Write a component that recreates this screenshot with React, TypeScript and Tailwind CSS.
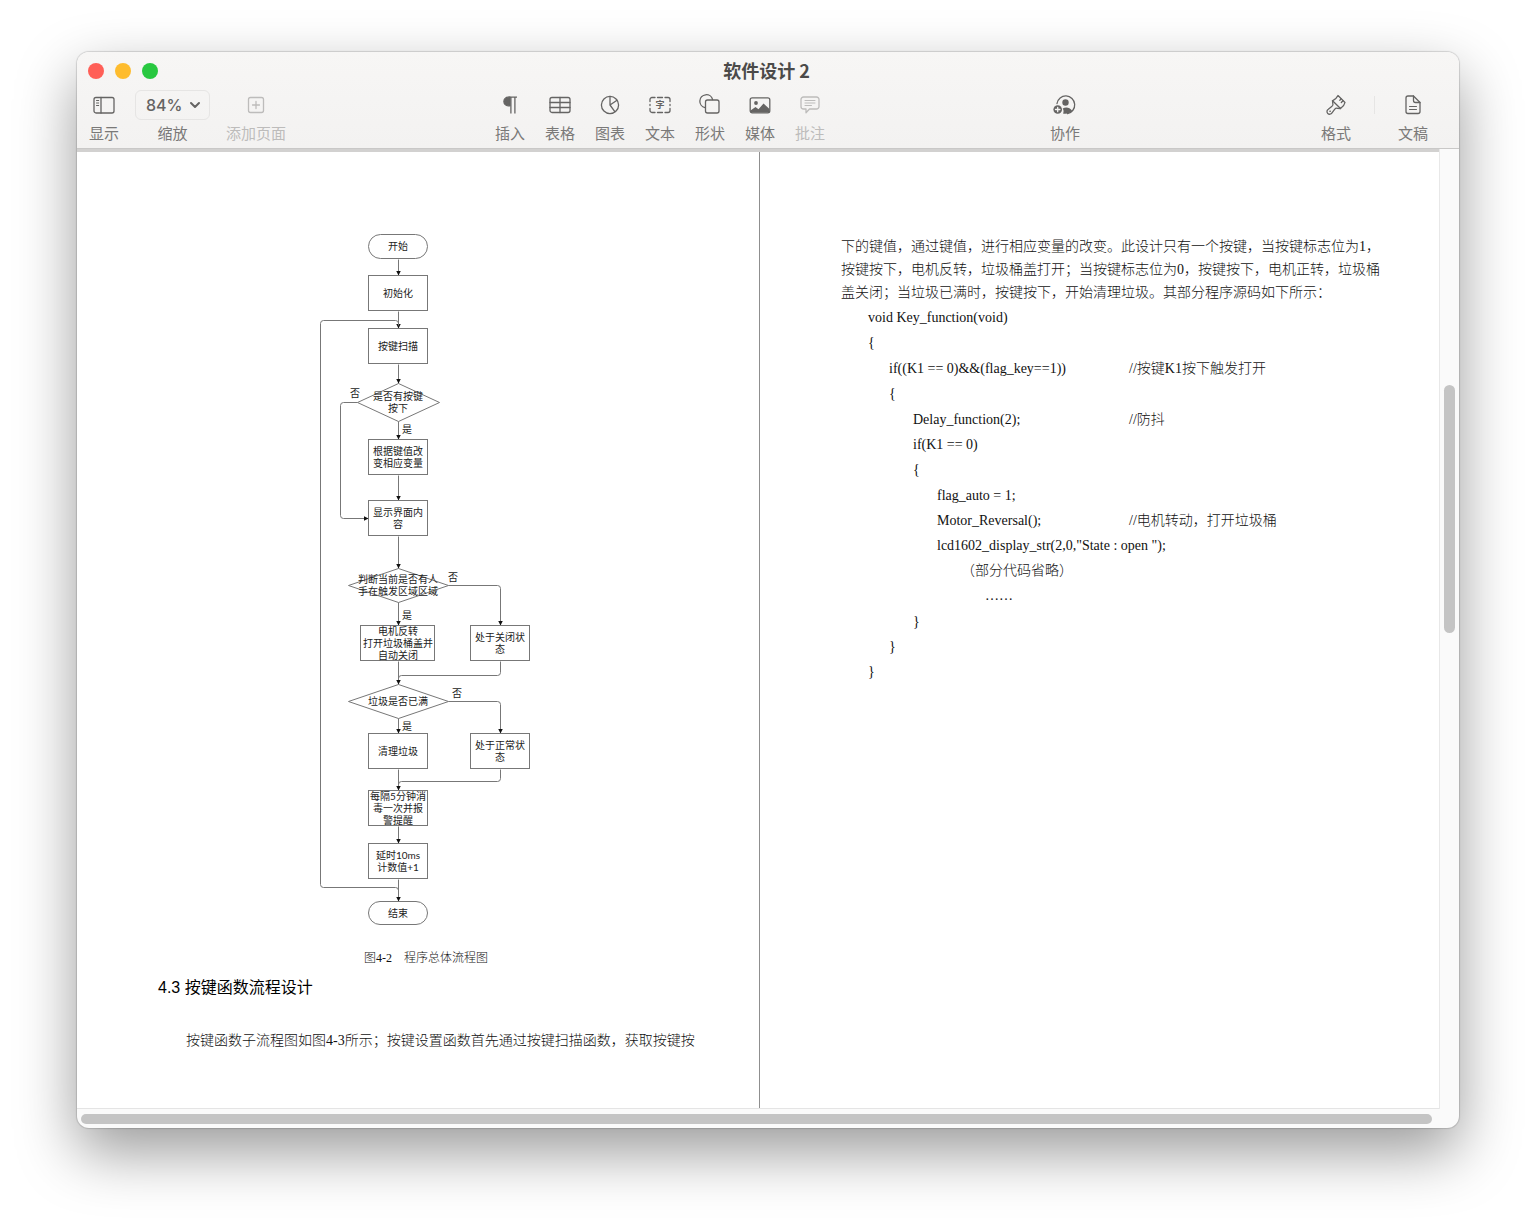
import type { ReactNode } from "react";
import { clsx } from "clsx";

type Box = { x: number; y: number; w: number; h: number; lines: string[]; top: number; pill?: boolean };

const BOXES: Box[] = [
  { x: 59, y: 10, w: 59, h: 24, lines: ["开始"], top: 22, pill: true },
  { x: 59, y: 51, w: 59, h: 35, lines: ["初始化"], top: 69 },
  { x: 59, y: 104, w: 59, h: 35, lines: ["按键扫描"], top: 122 },
  { x: 59, y: 215, w: 59, h: 35, lines: ["根据键值改", "变相应变量"], top: 227 },
  { x: 59, y: 276, w: 59, h: 35, lines: ["显示界面内", "容"], top: 288 },
  { x: 51, y: 401, w: 74, h: 35, lines: ["电机反转", "打开垃圾桶盖并", "自动关闭"], top: 407 },
  { x: 161, y: 401, w: 59, h: 35, lines: ["处于关闭状", "态"], top: 413 },
  { x: 59, y: 509, w: 59, h: 35, lines: ["清理垃圾"], top: 527 },
  { x: 161, y: 509, w: 59, h: 35, lines: ["处于正常状", "态"], top: 521 },
  { x: 59, y: 566, w: 59, h: 35, lines: ["每隔5分钟消", "毒一次并报", "警提醒"], top: 572 },
  { x: 59, y: 619, w: 59, h: 35, lines: ["延时10ms", "计数值+1"], top: 631 },
  { x: 59, y: 677, w: 59, h: 23, lines: ["结束"], top: 689, pill: true },
];

const DIAMONDS = [
  { y: 177, rx: 41, ry: 19, lines: ["是否有按键", "按下"], top: 172 },
  { y: 360, rx: 50, ry: 17, lines: ["判断当前是否有人", "手在触发区域区域"], top: 355 },
  { y: 476, rx: 50, ry: 17, lines: ["垃圾是否已满"], top: 477 },
];

const EDGES = [
  "M88 34V50",
  "M88 86V103",
  "M88 139V158",
  "M88 196V214",
  "M88 250V275",
  "M88 311V343",
  "M88 377V400",
  "M88 436V459",
  "M88 493V508",
  "M88 544V565",
  "M88 601V618",
  "M88 654V676",
  "M47 177H33Q30 177 30 180V290Q30 293 33 293H58",
  "M138 360H187Q190 360 190 363V400",
  "M138 476H187Q190 476 190 479V508",
];

const JOINS = [
  "M88 100V98Q88 95 85 95H13Q10 95 10 98V659Q10 662 13 662H85Q88 662 88 665",
  "M190 436V447Q190 450 187 450H91Q88 450 88 453",
  "M190 544V553Q190 556 187 556H91Q88 556 88 559",
];

const BRANCH_LABELS = [
  { x: 45, y: 169, text: "否" },
  { x: 97, y: 205, text: "是" },
  { x: 143, y: 353, text: "否" },
  { x: 97, y: 391, text: "是" },
  { x: 147, y: 469, text: "否" },
  { x: 97, y: 502, text: "是" },
];

type CodeLine = { indent: string; code: string; comment?: string };

// one group per scope
const CODE: CodeLine[][] = [
  [
    { indent: "pl-0", code: "void Key_function(void)" },
    { indent: "pl-0", code: "{" },
  ],
  [
    { indent: "pl-[21px]", code: "if((K1 == 0)&&(flag_key==1))", comment: "//按键K1按下触发打开" },
    { indent: "pl-[21px]", code: "{" },
  ],
  [
    { indent: "pl-[45px]", code: "Delay_function(2);", comment: "//防抖" },
    { indent: "pl-[45px]", code: "if(K1 == 0)" },
    { indent: "pl-[45px]", code: "{" },
  ],
  [
    { indent: "pl-[69px]", code: "flag_auto = 1;" },
    { indent: "pl-[69px]", code: "Motor_Reversal();", comment: "//电机转动，打开垃圾桶" },
    { indent: "pl-[69px]", code: 'lcd1602_display_str(2,0,"State : open ");' },
    { indent: "pl-[93px]", code: "（部分代码省略）" },
    { indent: "pl-[117px]", code: "……" },
  ],
  [
    { indent: "pl-[45px]", code: "}" },
    { indent: "pl-[21px]", code: "}" },
    { indent: "pl-0", code: "}" },
  ],
];

function Icon({ children }: { children: ReactNode }) {
  return (
    <svg
      width="24"
      height="24"
      viewBox="0 0 24 24"
      fill="none"
      stroke="currentColor"
      strokeWidth="1.3"
      strokeLinecap="round"
      strokeLinejoin="round"
      aria-hidden="true"
    >
      {children}
    </svg>
  );
}

const icons = {
  view: (
    <Icon>
      <rect x="2" y="4.5" width="20" height="15.5" rx="2" />
      <path d="M9 4.5V20" />
      <path d="M4.5 7.5H6.7M4.5 10H6.7M4.5 12.5H6.7" strokeWidth="1" />
    </Icon>
  ),
  addPage: (
    <Icon>
      <rect x="4.5" y="4.5" width="15" height="15" rx="2" />
      <path d="M12 8.5V15.5M8.5 12H15.5" />
    </Icon>
  ),
  insert: (
    <Icon>
      <path d="M12 4.2H10.2A4.3 4.3 0 0 0 10.2 12.8H12Z" fill="currentColor" />
      <path d="M10.5 4.2H19M12.9 4.2V20.5M16.9 4.2V20.5" strokeLinecap="butt" />
    </Icon>
  ),
  table: (
    <Icon>
      <rect x="2" y="4.5" width="20" height="15" rx="2" />
      <path d="M2 9.5H22M2 14.5H22M12 4.5V19.5" />
    </Icon>
  ),
  chart: (
    <Icon>
      <circle cx="12" cy="12" r="8.6" />
      <path d="M12 3.4V12L19 7.2M12 12L17 18.8" />
    </Icon>
  ),
  text: (
    <Icon>
      <path d="M2 8.5V6.5A2 2 0 0 1 4 4.5H7M9.5 4.5H14.5M17 4.5H20A2 2 0 0 1 22 6.5V8.5M22 11.5V12.5M22 15.5V17.5A2 2 0 0 1 20 19.5H17M14.5 19.5H9.5M7 19.5H4A2 2 0 0 1 2 17.5V15.5M2 12.5V11.5" />
      <text
        x="12"
        y="15"
        textAnchor="middle"
        fill="currentColor"
        stroke="none"
        className="font-['Noto_Sans_CJK_SC',sans-serif] text-[9px] font-bold"
      >
        字
      </text>
    </Icon>
  ),
  shape: (
    <Icon>
      <path d="M7 14.6A6.5 6.5 0 1 1 14.6 6.5" />
      <rect x="7.5" y="7" width="13.5" height="13" rx="2" />
    </Icon>
  ),
  media: (
    <Icon>
      <rect x="2.2" y="4.8" width="19.6" height="15" rx="2" />
      <circle cx="8" cy="10" r="1.9" fill="currentColor" stroke="none" />
      <path d="M2.5 17.5L7.5 14L10.5 16.2L15.5 10.5L21.5 16V19.5H2.5Z" fill="currentColor" stroke="none" />
    </Icon>
  ),
  comment: (
    <Icon>
      <path d="M5.5 4H18.5A2.5 2.5 0 0 1 21 6.5V13.5A2.5 2.5 0 0 1 18.5 16H11.5L8 19.8V16H5.5A2.5 2.5 0 0 1 3 13.5V6.5A2.5 2.5 0 0 1 5.5 4Z" />
      <path d="M7 7.5H17M7 10H17M7 12.5H13.5" strokeWidth="1" />
    </Icon>
  ),
  collaborate: (
    <Icon>
      <path d="M4 10.5A8.9 8.9 0 1 1 14.5 20.6" />
      <circle cx="12.5" cy="9.5" r="3.2" fill="currentColor" stroke="none" />
      <path d="M10 20.5C10.8 19.5 10.8 17 9.7 15.6C12.5 13.7 16.5 14 19 17.5C17.2 20.2 13.5 21.3 10 20.5Z" fill="currentColor" stroke="none" />
      <circle cx="4.7" cy="16.5" r="4.3" fill="currentColor" stroke="none" />
      <path d="M4.7 14.3V18.7M2.5 16.5H6.9" stroke="#f5f4f3" />
    </Icon>
  ),
  format: (
    <Icon>
      <path d="M14 2.5L21 9.5Q20.5 12.5 16.5 15.5L8.5 7.8Q12.5 5.8 14 2.5Z" />
      <path d="M8.5 7.8L8.8 10.5Q9.5 12.3 8 13.3L4.3 16.2A2.7 2.7 0 1 0 8 19.9L10.8 16.2Q12 14.7 13.7 15.4L16.5 15.5" />
      <path d="M17 5.7L15.8 7.3M19 7.7L17.3 9.5" />
      <circle cx="6" cy="18.2" r="0.5" fill="currentColor" strokeWidth="0.5" />
    </Icon>
  ),
  document: (
    <Icon>
      <path d="M7 3H12.5L19 9.5V18.5A2 2 0 0 1 17 20.5H7A2 2 0 0 1 5 18.5V5A2 2 0 0 1 7 3Z" />
      <path d="M12.5 3V7.5A2 2 0 0 0 14.5 9.5H19" />
      <path d="M8.5 13.5H15.5M8.5 16.5H15.5" strokeWidth="1" />
    </Icon>
  ),
};

function ToolButton({ icon, label, disabled }: { icon: ReactNode; label: string; disabled?: boolean }) {
  return (
    <button
      type="button"
      disabled={disabled}
      className={clsx(
        "flex shrink-0 flex-col items-center gap-[3px] text-[15px] leading-5 whitespace-nowrap",
        disabled ? "text-[#bdbcbb]" : "text-[#7a7978]",
      )}
    >
      <span className={clsx("flex h-[30px] items-center", !disabled && "text-[#656463]")}>{icon}</span>
      {label}
    </button>
  );
}

function Toolbar() {
  return (
    <header className="border-b border-[#c9c8c7] bg-linear-to-b from-[#f7f6f5] to-[#f3f2f1] pb-[5px]">
      <div className="grid h-[38px] grid-cols-[1fr_auto_1fr] items-center px-[11px]">
        <div className="flex gap-[11px]">
          <button type="button" aria-label="关闭" className="size-4 rounded-full bg-[#ff5f57]" />
          <button type="button" aria-label="最小化" className="size-4 rounded-full bg-[#febc2e]" />
          <button type="button" aria-label="全屏" className="size-4 rounded-full bg-[#28c840]" />
        </div>
        <h1 className="pr-[3px] pb-[3px] text-lg leading-6 font-bold text-[#4b4a49]">软件设计 2</h1>
      </div>

      <div className="flex items-start pr-[31px] pl-3">
        <div className="flex gap-4">
          <ToolButton icon={icons.view} label="显示" />
          <div className="flex flex-col items-center gap-[3px]">
            <div className="relative">
              <select
                id="zoom"
                defaultValue="84"
                className="h-[30px] w-[75px] appearance-none rounded-md border border-[#e6e5e4] bg-transparent pl-[10px] font-['Inter',sans-serif] text-base leading-5 font-medium text-[#656463]"
              >
                <option value="84">84%</option>
                <option value="100">100%</option>
              </select>
              <svg
                className="pointer-events-none absolute top-[10px] right-[9px] text-[#656463]"
                width="12"
                height="10"
                viewBox="0 0 12 10"
                fill="none"
                stroke="currentColor"
                strokeWidth="2"
                strokeLinecap="round"
                strokeLinejoin="round"
                aria-hidden="true"
              >
                <path d="M2 3L6 7L10 3" />
              </svg>
            </div>
            <label htmlFor="zoom" className="text-[15px] leading-5 text-[#7a7978]">
              缩放
            </label>
          </div>
          <ToolButton icon={icons.addPage} label="添加页面" disabled />
        </div>
        <div className="flex-[26]" />
        <div className="flex gap-5">
          <ToolButton icon={icons.insert} label="插入" />
          <ToolButton icon={icons.table} label="表格" />
          <ToolButton icon={icons.chart} label="图表" />
          <ToolButton icon={icons.text} label="文本" />
          <ToolButton icon={icons.shape} label="形状" />
          <ToolButton icon={icons.media} label="媒体" />
          <ToolButton icon={icons.comment} label="批注" disabled />
        </div>
        <div className="flex-[28]" />
        <ToolButton icon={icons.collaborate} label="协作" />
        <div className="flex-[30]" />
        <div className="flex gap-[23px]">
          <ToolButton icon={icons.format} label="格式" />
          <div className="mt-[6px] h-[18px] w-px bg-[#e6e5e4]" />
          <ToolButton icon={icons.document} label="文稿" />
        </div>
      </div>
    </header>
  );
}

function NodeText({ x, top, lines }: { x: number; top: number; lines: string[] }) {
  return (
    <text textAnchor="middle" fill="#222" className="text-[10px]">
      {lines.map((line, i) => (
        <tspan key={line} x={x} y={top + 3 + i * 12}>
          {line}
        </tspan>
      ))}
    </text>
  );
}

function Flowchart() {
  return (
    <svg
      width="232"
      height="710"
      viewBox="0 0 232 710"
      role="img"
      aria-label="程序总体流程图"
      className="mx-auto block font-['Lato','Noto_Sans_CJK_SC',sans-serif]"
    >
      <defs>
        <marker id="arrow" viewBox="0 0 6 6" refX="6" refY="3" markerWidth="5" markerHeight="5" orient="auto">
          <path d="M0 0L6 3L0 6Z" fill="#111" />
        </marker>
      </defs>
      <g transform="translate(0.5 0.5)" fill="none" stroke="#777" strokeWidth="1">
        {EDGES.map((d) => (
          <path key={d} d={d} markerEnd="url(#arrow)" />
        ))}
        {JOINS.map((d) => (
          <path key={d} d={d} />
        ))}
        {BOXES.map((b) => (
          <rect key={b.lines[0]} x={b.x - 1} y={b.y - 1} width={b.w} height={b.h} rx={b.pill ? b.h / 2 : 0} />
        ))}
        {DIAMONDS.map((d) => (
          <path
            key={d.y}
            d={`M${88 - d.rx} ${d.y}L88 ${d.y - d.ry}L${88 + d.rx} ${d.y}L88 ${d.y + d.ry}Z`}
          />
        ))}
      </g>
      {BOXES.map((b) => (
        <NodeText key={b.lines[0]} x={b.x + Math.floor(b.w / 2)} top={b.top} lines={b.lines} />
      ))}
      {DIAMONDS.map((d) => (
        <NodeText key={d.y} x={88} top={d.top} lines={d.lines} />
      ))}
      {BRANCH_LABELS.map((l) => (
        <NodeText key={l.y} x={l.x} top={l.y} lines={[l.text]} />
      ))}
    </svg>
  );
}

function LeftPage() {
  return (
    <article className="border-r border-[#8f8f8f] pt-[73px] pr-[65px] pl-[81px] whitespace-nowrap">
      <figure>
        <Flowchart />
        <figcaption className="mt-[13px] text-center font-['Liberation_Serif','Noto_Sans_CJK_SC',serif] text-xs leading-5 font-light text-[#111]">
          图4-2　程序总体流程图
        </figcaption>
      </figure>
      <h2 className="mt-2 font-['Liberation_Sans','Noto_Sans_CJK_SC',sans-serif] text-base leading-6 text-black">
        4.3 按键函数流程设计
      </h2>
      <p className="mt-[29px] pl-7 font-['Liberation_Serif','Noto_Sans_CJK_SC',serif] text-sm leading-6 font-light text-[#111]">
        按键函数子流程图如图4-3所示；按键设置函数首先通过按键扫描函数，获取按键按
      </p>
    </article>
  );
}

function RightPage() {
  return (
    <article className="pt-[83px] pl-[81px] font-['Liberation_Serif','Noto_Sans_CJK_SC',serif] text-sm font-light whitespace-nowrap text-[#111]">
      <p className="leading-[23px]">
        下的键值，通过键值，进行相应变量的改变。此设计只有一个按键，当按键标志位为1，
        <br />
        按键按下，电机反转，垃圾桶盖打开；当按键标志位为0，按键按下，电机正转，垃圾桶
        <br />
        盖关闭；当垃圾已满时，按键按下，开始清理垃圾。其部分程序源码如下所示：
      </p>
      <div className="mt-px flex flex-col gap-px pl-[27px] leading-[25px]">
        {CODE.map((group, g) => (
          <div key={g}>
            {group.map((line, i) => (
              <div key={i} className="grid h-[25px] grid-cols-[261px_1fr]">
                <code className={clsx("font-['Liberation_Serif','Noto_Sans_CJK_SC',serif]", line.indent)}>
                  {line.code}
                </code>
                {line.comment && <span>{line.comment}</span>}
              </div>
            ))}
          </div>
        ))}
      </div>
    </article>
  );
}

export default function App() {
  return (
    <div className="flex min-h-screen flex-col bg-white px-[77px] pt-[52px] pb-[102px] font-['Noto_Sans_CJK_SC',sans-serif]">
      <div className="flex flex-1 flex-col overflow-hidden rounded-xl bg-[#fafafa] shadow-[0_0_1px_1px_rgba(0,0,0,0.14),0_24px_60px_rgba(0,0,0,0.4)]">
        <Toolbar />
        <main className="flex flex-1">
          <div className="grid flex-1 grid-cols-[minmax(0,683fr)_minmax(0,679fr)] border-t-3 border-b border-t-[#d2d1d0] border-b-[#e4e4e4] bg-white">
            <LeftPage />
            <RightPage />
          </div>
          <div className="w-5 border-l border-[#e8e8e8] px-1 pt-[236px]">
            <div className="h-[248px] w-[11px] rounded-full bg-[#c4c4c4]" />
          </div>
        </main>
        <div className="h-[19px] pt-[5px] pr-[27px] pl-1">
          <div className="h-[10px] rounded-full bg-[#c4c4c4]" />
        </div>
      </div>
    </div>
  );
}
